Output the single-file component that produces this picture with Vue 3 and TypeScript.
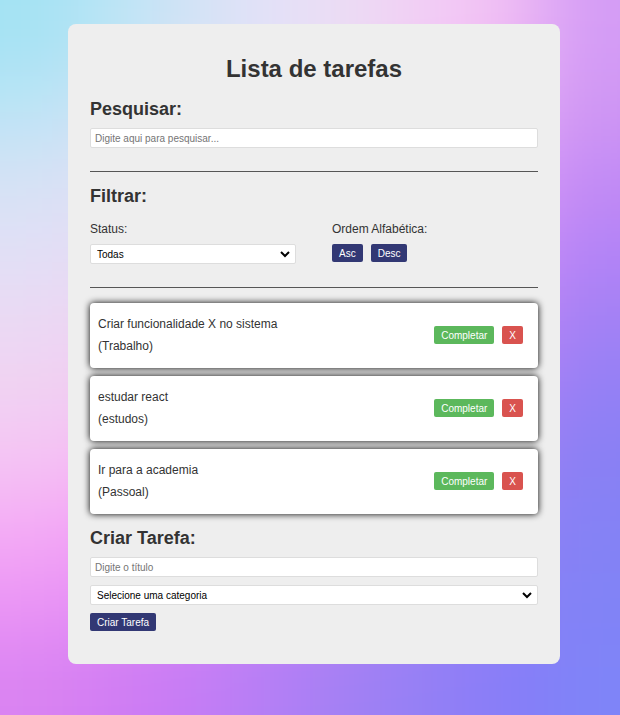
<script setup lang="ts">
import { computed, ref } from 'vue'

interface Task {
  id: number
  title: string
  category: string
  done: boolean
}

const tasks = ref<Task[]>([
  { id: 1, title: 'Criar funcionalidade X no sistema', category: 'Trabalho', done: false },
  { id: 2, title: 'estudar react', category: 'estudos', done: false },
  { id: 3, title: 'Ir para a academia', category: 'Passoal', done: false },
])
const search = ref('')
const status = ref('all')
const order = ref<'' | 'asc' | 'desc'>('')
const title = ref('')
const category = ref('')

const visibleTasks = computed(() => {
  const list = tasks.value.filter(
    (t) =>
      t.title.toLowerCase().includes(search.value.toLowerCase()) &&
      (status.value === 'all' || (status.value === 'done') === t.done),
  )
  if (order.value) {
    const sign = order.value === 'asc' ? 1 : -1
    list.sort((a, b) => sign * a.title.localeCompare(b.title))
  }
  return list
})

function removeTask(id: number) {
  tasks.value = tasks.value.filter((t) => t.id !== id)
}

function createTask() {
  if (!title.value || !category.value) return
  tasks.value.push({ id: Date.now(), title: title.value, category: category.value, done: false })
  title.value = ''
  category.value = ''
}

// Colour mesh of the backdrop: each row is a band from left to right.
const mesh = [
  ['#a4e3f3', '#bce4f6', '#d4e3f5', '#e4e1f8', '#ecdcf3', '#f2cdf5', '#f2bff4', '#d49cf5'],
  ['#bbe4f6', '#d0e2f4', '#dce1f6', '#e4e1f8', '#efd5f4', '#f0c6f6', '#eab0f6', '#cf96f4'],
  ['#d5e2f5', '#dfdff4', '#e4dff6', '#ecd8f5', '#efc8f5', '#e8b4f6', '#e09cf7', '#c28bf5'],
  ['#e1e0f6', '#e7daf4', '#ecd6f4', '#eecaf5', '#eab4f6', '#e09ef6', '#d490f6', '#b383f6'],
  ['#ebd9f3', '#eed2f2', '#f0c8f5', '#ecb8f5', '#e0a0f6', '#d090f6', '#c384f5', '#a281f5'],
  ['#f1d2f2', '#f2c8f2', '#f2b8f6', '#e6a4f6', '#d894f6', '#c486f6', '#b681f4', '#9280f5'],
  ['#f5c3f4', '#f5b4f4', '#eea4f7', '#de94f6', '#cc88f6', '#b481f6', '#a180f4', '#8880f4'],
  ['#f4a9f5', '#f09df4', '#e28cf6', '#d488f6', '#c084f6', '#a880f6', '#947ff5', '#8482f5'],
  ['#ea94f5', '#e28cf4', '#d484f5', '#c580f5', '#b081f5', '#9a80f5', '#8b7ef7', '#8183f6'],
  ['#da83f2', '#d07cf3', '#c57cf5', '#b37ff5', '#a280f4', '#9480f5', '#887cf8', '#7f84f8'],
]
const cells = mesh.flatMap((row, r) => row.map((fill, c) => ({ fill, r, c })))
</script>

<template>
  <div class="page">
    <svg class="backdrop" viewBox="0 0 80 100" preserveAspectRatio="none" aria-hidden="true">
      <defs>
        <filter id="mesh-blur" x="-20%" y="-20%" width="140%" height="140%" color-interpolation-filters="sRGB">
          <feGaussianBlur stdDeviation="5" />
        </filter>
      </defs>
      <g filter="url(#mesh-blur)">
        <rect
          v-for="cell in cells"
          :key="`${cell.r}-${cell.c}`"
          :x="cell.c === 0 ? -20 : cell.c * 10"
          :y="cell.r === 0 ? -20 : cell.r * 10"
          :width="cell.c === 0 ? 31 : cell.c === 7 ? 30 : 11"
          :height="cell.r === 0 ? 31 : cell.r === 9 ? 30 : 11"
          :fill="cell.fill"
        />
      </g>
    </svg>
    <main class="card">
      <h1>Lista de tarefas</h1>

      <section class="divided">
        <h2><label for="search">Pesquisar:</label></h2>
        <input id="search" v-model="search" type="text" placeholder="Digite aqui para pesquisar..." />
      </section>

      <section class="divided">
        <h2>Filtrar:</h2>
        <div class="filters">
          <div class="filter">
            <label for="status">Status:</label>
            <div class="select">
              <select id="status" v-model="status">
                <option value="all">Todas</option>
                <option value="done">Completas</option>
                <option value="open">Incompletas</option>
              </select>
              <svg viewBox="0 0 10 8" aria-hidden="true"><path d="M1 2 5 6 9 2" /></svg>
            </div>
          </div>
          <div class="filter">
            <p>Ordem Alfabética:</p>
            <div class="actions">
              <button type="button" @click="order = 'asc'">Asc</button>
              <button type="button" @click="order = 'desc'">Desc</button>
            </div>
          </div>
        </div>
      </section>

      <ul class="tasks">
        <li v-for="task in visibleTasks" :key="task.id" class="task" :class="{ done: task.done }">
          <div class="content">
            <p>{{ task.title }}</p>
            <p>({{ task.category }})</p>
          </div>
          <div class="actions">
            <button type="button" class="complete" @click="task.done = !task.done">Completar</button>
            <button type="button" class="remove" @click="removeTask(task.id)">X</button>
          </div>
        </li>
      </ul>

      <section>
        <h2>Criar Tarefa:</h2>
        <form class="create" @submit.prevent="createTask">
          <input v-model="title" type="text" placeholder="Digite o título" aria-label="Título" />
          <div class="select">
            <select v-model="category" aria-label="Categoria">
              <option value="">Selecione uma categoria</option>
              <option value="Trabalho">Trabalho</option>
              <option value="Pessoal">Pessoal</option>
              <option value="Estudos">Estudos</option>
            </select>
            <svg viewBox="0 0 10 8" aria-hidden="true"><path d="M1 2 5 6 9 2" /></svg>
          </div>
          <button type="submit">Criar Tarefa</button>
        </form>
      </section>
    </main>
  </div>
</template>

<style>
body {
  margin: 0;
}
</style>

<style scoped>
.page {
  position: relative;
  box-sizing: border-box;
  min-height: 100vh;
  padding: 24px 60px 48px 68px;
  color: #333;
  font-family: 'Liberation Sans', Arial, sans-serif;
  font-size: 12px;
  line-height: 14px;
}
.backdrop {
  position: absolute;
  inset: 0;
  width: 100%;
  height: 100%;
}
.card {
  position: relative;
  box-sizing: border-box;
  max-width: 560px;
  margin: 0 auto;
  padding: 30px 22px 33px;
  border-radius: 8px;
  background: #eee;
}
h1,
h2,
p,
ul {
  margin: 0;
  padding: 0;
}
h1 {
  margin-bottom: 16px;
  font-size: 24px;
  line-height: 30px;
  text-align: center;
}
h2 {
  margin-bottom: 10px;
  font-size: 18px;
  line-height: 18px;
}
.divided {
  margin-bottom: 15px;
  padding-bottom: 23px;
  border-bottom: 1px solid #555;
}
input,
select {
  display: block;
  box-sizing: border-box;
  width: 100%;
  height: 20px;
  margin: 0;
  padding: 0 4px;
  border: 1px solid #ddd;
  border-radius: 2px;
  background: #fff;
  color: #000;
  font-family: inherit;
  font-size: 10px;
}
input::placeholder {
  color: #757575;
}
select {
  padding: 0 20px 0 6px;
  appearance: none;
}
.select {
  display: grid;
  align-items: center;
}
.select > * {
  grid-area: 1 / 1;
}
.select svg {
  justify-self: end;
  width: 10px;
  height: 8px;
  margin-right: 6px;
  pointer-events: none;
}
.select path {
  fill: none;
  stroke: #000;
  stroke-width: 2;
}
.filters {
  display: flex;
  gap: 36px;
  padding-top: 7px;
}
.filter {
  display: flex;
  flex: 1;
  flex-direction: column;
  gap: 8px;
}
.actions {
  display: flex;
  gap: 8px;
}
button {
  height: 18px;
  padding: 0 7px;
  border: 0;
  border-radius: 2px;
  background: #323874;
  color: #fff;
  font-family: inherit;
  font-size: 10px;
  cursor: pointer;
}
.tasks {
  display: flex;
  flex-direction: column;
  gap: 8px;
  margin-bottom: 15px;
  list-style: none;
}
.task {
  display: flex;
  align-items: center;
  justify-content: space-between;
  padding: 14px 15px 15px 8px;
  border-radius: 4px;
  background: #fff;
  box-shadow: 0 0 7px #000;
}
.content {
  display: flex;
  flex-direction: column;
  gap: 8px;
}
.complete {
  background: #5cb85c;
}
.remove {
  background: #d9534f;
}
.done .content {
  text-decoration: line-through;
}
.create {
  display: flex;
  flex-direction: column;
  align-items: flex-start;
  gap: 8px;
}
.create .select {
  width: 100%;
}
</style>
